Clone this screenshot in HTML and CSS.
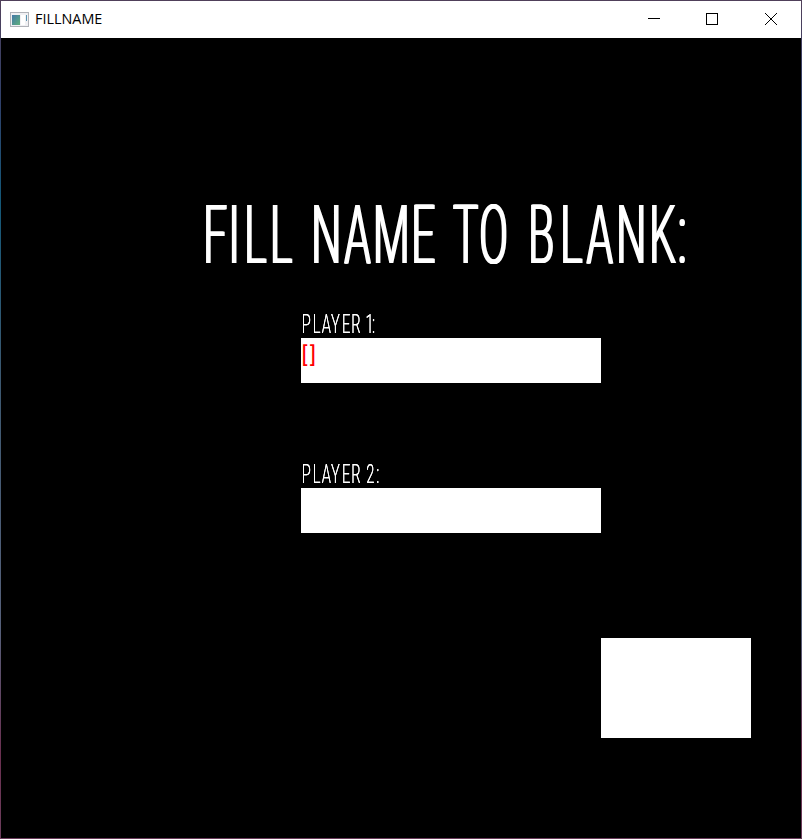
FILE: index.html
```html
<!DOCTYPE html>
<html lang="en">
<head>
<meta charset="utf-8">
<title>FILLNAME</title>
<link rel="stylesheet" href="styles.css">
</head>
<body>
<div class="window">
  <header class="titlebar">
    <svg class="app-icon" width="20" height="16" viewBox="0 0 20 16">
      <defs><linearGradient id="pane" x1="0" y1="0" x2="1" y2="1"><stop offset="0" stop-color="#4478a8"/><stop offset="1" stop-color="#5fb07c"/></linearGradient></defs>
      <rect x=".5" y=".5" width="18" height="14" fill="#f0f0f3" stroke="#b0b2b8"/>
      <rect x="2" y="3" width="8" height="10" fill="url(#pane)"/>
      <rect x="11" y="3" width="4" height="10" fill="#fff"/>
      <rect x="16" y="3" width="1" height="6" fill="#5a94b0"/>
    </svg>
    <span class="caption">FILLNAME</span>
    <div class="controls">
      <svg width="58" height="37" viewBox="0 0 58 37"><path d="M23 17.5h12"/></svg>
      <svg width="58" height="37" viewBox="0 0 58 37"><rect x="23.5" y="12.5" width="11" height="11"/></svg>
      <svg width="60" height="37" viewBox="0 0 60 37"><path d="M24 12l12 12M36 12l-12 12"/></svg>
    </div>
  </header>
  <main class="stage">
    <svg class="heading" width="500" height="76"><text transform="scale(.52 1)" y="66" x="2.3 50.9 81.1 130.6 180 210 273.8 329 402.2 450 482.7 533.2 600 627.3 688.8 739.2 796.5 860 915">FILL NAME TO BLANK:</text></svg>
    <section class="field">
      <svg class="label" width="100" height="28"><text transform="scale(.55 1)" y="23" x="1.2 21.4 37.7 54.7 74.6 91.6 106 117.5 129">PLAYER 1:</text></svg>
      <div class="input"><svg class="cursor" width="20" height="40"><text y="25.4" x=".4 9">[]</text></svg></div>
    </section>
    <section class="field">
      <svg class="label" width="100" height="28"><text transform="scale(.55 1)" y="23" x="1.2 21.4 37.7 54.7 74.6 91.6 106 118.5 137">PLAYER 2:</text></svg>
      <div class="input"></div>
    </section>
    <div class="button"></div>
  </main>
</div>
</body>
</html>
```
FILE: styles.css
```css
* { box-sizing: border-box; }
body { margin: 0; background: #000; }
svg { display: block; overflow: visible; }
.window {
  width: 802px;
  height: 839px;
  border: 1px solid;
  border-image: linear-gradient(#50405a 0, #30406a 12%, #145878 24%, #3c5870 45%, #56607a 75%, #6a3050 90%, #6b3e5c 100%) 1;
  background: #000;
}
.titlebar {
  display: flex;
  align-items: center;
  height: 37px;
  padding-left: 9px;
  background: #fff;
}
.caption {
  margin: -2px 0 0 5px;
  font: 14.4px/20px "Open Sans", sans-serif;
  color: #000;
}
.controls { display: flex; margin-left: auto; }
.controls svg { fill: none; stroke: #000; stroke-width: 1; }
.stage {
  display: flex;
  flex-direction: column;
  height: 800px;
  padding-top: 159px;
  font-family: Roboto, sans-serif;
  font-weight: 300;
}
.heading {
  margin: 0 0 37px 200px;
  fill: #fff;
  font-size: 81.5px;
  filter: drop-shadow(1px 0 0 #fff) drop-shadow(1px 0 0 #fff);
}
.field { margin: 0 0 77px 300px; }
.label { fill: #fff; font-size: 26.7px; filter: drop-shadow(.5px 0 0 #fff); }
.input { width: 300px; height: 45px; background: #fff; }
.cursor { fill: #f00; font-size: 22.6px; font-weight: 400; }
.button { width: 150px; height: 100px; margin: 28px 0 0 600px; background: #fff; }
```
